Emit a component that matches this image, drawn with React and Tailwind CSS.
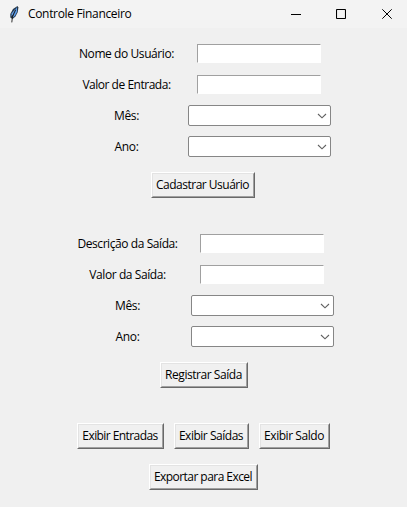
import React from "react";

function Label({ children, className = "" }) {
  return (
    <div className="flex w-[110px] justify-center">
      <span className={`whitespace-nowrap ${className}`}>{children}</span>
    </div>
  );
}

function Entry() {
  return (
    <div className="flex w-[143px] justify-center pr-px">
      <div className="h-[19px] w-[124px] border border-t-[#a0a0a0] border-r-white border-b-white border-l-[#a0a0a0] bg-white" />
    </div>
  );
}

function Combo() {
  return (
    <div className="flex h-[21px] w-[143px] items-center justify-end rounded-[2px] border border-[#868686] bg-white pr-[3px]">
      <svg width="10" height="6" viewBox="0 0 10 6" fill="none" stroke="#606060" strokeWidth="1.1">
        <path d="M1 1 L5 4.8 L9 1" />
      </svg>
    </div>
  );
}

function Row({ label, className, gap = "gap-[6px]", children }) {
  return (
    <div className={`flex h-[21px] items-center ${gap}`}>
      <Label className={className}>{label}</Label>
      {children}
    </div>
  );
}

function Button({ children, width, text }) {
  return (
    <button
      className={`h-[26px] ${width} border border-t-white border-r-[#696969] border-b-[#696969] border-l-white`}
    >
      <span className="flex h-full items-center justify-center border border-t-[#e3e3e3] border-r-[#a0a0a0] border-b-[#a0a0a0] border-l-[#e3e3e3]">
        <span className={`whitespace-nowrap ${text}`}>{children}</span>
      </span>
    </button>
  );
}

export default function App() {
  return (
    <div className="flex h-[507px] w-[407px] flex-col overflow-hidden bg-[#f0f0f0] font-['Open_Sans','Noto_Sans',sans-serif] text-[12px] leading-[16px] text-black">
      <header className="flex h-7 items-center bg-[#f3f3f3] pl-[8px]">
        <svg width="12" height="18" viewBox="0 0 12 18">
          <path d="M9.5 1 L10.4 2.5 L9.8 7 L7.5 11.5 L4.5 14 L2.3 12.5 L2.3 9 L5 4 Z" fill="#26384a" />
          <path d="M8.8 2 L9.2 6.5 L7 10.8 L4.8 12.6 L6.3 7 Z" fill="#5b9bea" />
          <path d="M7.7 3.4 L3.8 8.3 L3.2 11.6 L4.8 9.4 Z" fill="#6aa5ee" />
          <path d="M7.6 5 L4.4 12 L3.8 17.4" fill="none" stroke="#1a1a1a" strokeWidth="0.9" />
        </svg>
        <span className="ml-[8px] whitespace-nowrap tracking-[-0.33px]">Controle Financeiro</span>
        <div className="ml-auto flex items-center pr-[15px]">
          <svg className="mr-[35px]" width="10" height="10" viewBox="0 0 10 10"><path d="M0 5.5H10" stroke="#000" /></svg>
          <svg className="mr-[36px]" width="10" height="10" viewBox="0 0 10 10"><rect x=".5" y=".5" width="9" height="9" rx=".8" fill="none" stroke="#000" strokeWidth="1.1" /></svg>
          <svg width="10" height="10" viewBox="0 0 10 10"><path d="M.3.3L9.7 9.7M9.7.3L.3 9.7" stroke="#000" /></svg>
        </div>
      </header>

      <main className="flex flex-col">
        <section className="mt-[15px] ml-[72px] flex flex-col gap-[10px]">
          <Row label="Nome do Usuário:" className="pr-[1px] tracking-[-0.42px]"><Entry /></Row>
          <Row label="Valor de Entrada:" className="pr-[1px] tracking-[-0.48px]"><Entry /></Row>
          <Row label="Mês:" className="pr-[1px] tracking-[-0.3px]"><Combo /></Row>
          <Row label="Ano:" className="pr-[1px] tracking-[-0.3px]"><Combo /></Row>
        </section>
        <div className="mt-[15px] ml-[151px] flex">
          <Button width="w-[104px]" text="pr-[1px] tracking-[-0.5px]">Cadastrar Usuário</Button>
        </div>

        <section className="mt-[35px] ml-[73px] flex flex-col gap-[10px]">
          <Row gap="gap-[8px]" label="Descrição da Saída:" className="pr-[1px] tracking-[-0.42px]"><Entry /></Row>
          <Row gap="gap-[8px]" label="Valor da Saída:" className="pr-[1px] tracking-[-0.42px]"><Entry /></Row>
          <Row gap="gap-[8px]" label="Mês:" className="pr-[1px] tracking-[-0.3px]"><Combo /></Row>
          <Row gap="gap-[8px]" label="Ano:" className="pr-[1px] tracking-[-0.3px]"><Combo /></Row>
        </section>
        <div className="mt-[15px] ml-[160px] flex">
          <Button width="w-[88px]" text="pr-[1px] tracking-[-0.45px]">Registrar Saída</Button>
        </div>

        <div className="mt-[35px] ml-[77px] flex gap-[10px]">
          <Button width="w-[87px]" text="pr-[1px] tracking-[-0.58px]">Exibir Entradas</Button>
          <Button width="w-[75px]" text="pr-[1px] tracking-[-0.48px]">Exibir Saídas</Button>
          <Button width="w-[71px]" text="pr-[1px] tracking-[-0.45px]">Exibir Saldo</Button>
        </div>
        <div className="mt-[15px] ml-[149px] flex">
          <Button width="w-[109px]" text="pr-[1px] tracking-[-0.55px]">Exportar para Excel</Button>
        </div>
      </main>
    </div>
  );
}
